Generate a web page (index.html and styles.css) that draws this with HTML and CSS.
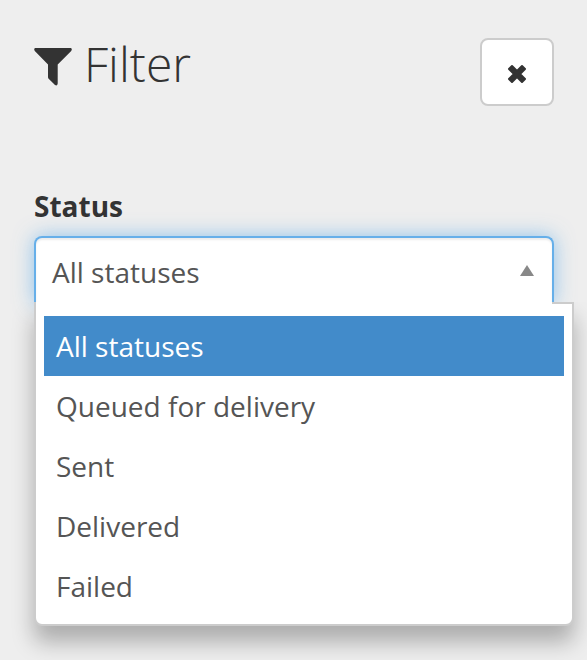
FILE: index.html
```html
<!DOCTYPE html>
<html lang="en">
<head>
  <meta charset="UTF-8" />
  <title>Filter</title>
  <link rel="stylesheet" href="styles.css">
</head>
<body>
  <div class="filter-header">
    <svg class="funnel" width="38" height="38" viewBox="0 0 38 38">
      <path d="M1.2 0H36.8Q38.6 .8 37.2 3L23.7 16.4V35.5Q23.3 38.3 21 37L14.4 30.4Q14 30 14 29V16.4L.8 3Q-.6 .8 1.2 0Z" fill="#333" />
    </svg>
    <h1>Filter</h1>
    <button class="btn-close" type="button" aria-label="Close">
      <svg width="20" height="20" viewBox="0 0 20 20">
        <path d="M5 2L10 7L15 2L18 5L13 10L18 15L15 18L10 13L5 18L2 15L7 10L2 5Z" fill="#333" stroke="#333" stroke-width="2" stroke-linejoin="round" />
      </svg>
    </button>
  </div>

  <label class="field-label">Status</label>
  <div class="select">
    <div class="select-choice">
      <span>All statuses</span>
      <span class="arrow"></span>
    </div>
    <ul class="select-drop">
      <li class="highlighted">All statuses</li>
      <li>Queued for delivery</li>
      <li>Sent</li>
      <li>Delivered</li>
      <li>Failed</li>
    </ul>
  </div>
</body>
</html>
```
FILE: styles.css
```css
* {
  box-sizing: border-box;
}
body {
  margin: 0;
  padding: 38px 33px 0 34px;
  height: 660px;
  overflow: hidden;
  background: #eee;
  color: #333;
  font-family: "Open Sans", sans-serif;
  font-size: 28px;
}
.filter-header {
  display: flex;
  align-items: flex-start;
  height: 149px;
}
.funnel {
  margin-top: 10px;
}
h1 {
  margin: 0 0 0 12px;
  font-size: 48px;
  font-weight: 300;
  line-height: 52px;
}
.btn-close {
  display: flex;
  align-items: center;
  justify-content: center;
  width: 74px;
  height: 68px;
  margin-left: auto;
  padding: 4px 0 0;
  background: #fff;
  border: 2px solid #ccc;
  border-radius: 8px;
}
.field-label {
  display: block;
  height: 49px;
  font-weight: 700;
  line-height: 38px;
}
.select {
  position: relative;
  color: #555;
}
.select-choice {
  display: flex;
  align-items: center;
  justify-content: space-between;
  height: 68px;
  padding: 2px 18px 0 16px;
  background: #fff;
  border: 2px solid #66afe9;
  border-bottom: 0;
  border-radius: 8px 8px 0 0;
  box-shadow: inset 0 2px 2px rgba(0,0,0,0.075), 0 0 20px rgba(102,175,233,0.7);
}
.arrow {
  margin-top: -4px;
  border: 7px solid transparent;
  border-top: 0;
  border-bottom: 11px solid #888;
}
.select-drop {
  position: absolute;
  top: 66px;
  left: 0;
  width: 540px;
  height: 324px;
  margin: 0;
  padding: 12px 8px 8px;
  list-style: none;
  background: #fff;
  border: 2px solid #ccc;
  border-radius: 0 0 8px 8px;
  box-shadow: 0 16px 22px rgba(0,0,0,0.28);
  clip-path: inset(0 -40px -50px -40px);
}
/* hides the top border where the list joins the select */
.select-drop::before {
  content: "";
  position: absolute;
  top: -2px;
  left: 0;
  width: 516px;
  height: 2px;
  background: #fff;
}
.select-drop li {
  height: 60px;
  padding: 0 12px;
  line-height: 60px;
}
.select-drop .highlighted {
  background: #428bca;
  color: #fff;
}
```
